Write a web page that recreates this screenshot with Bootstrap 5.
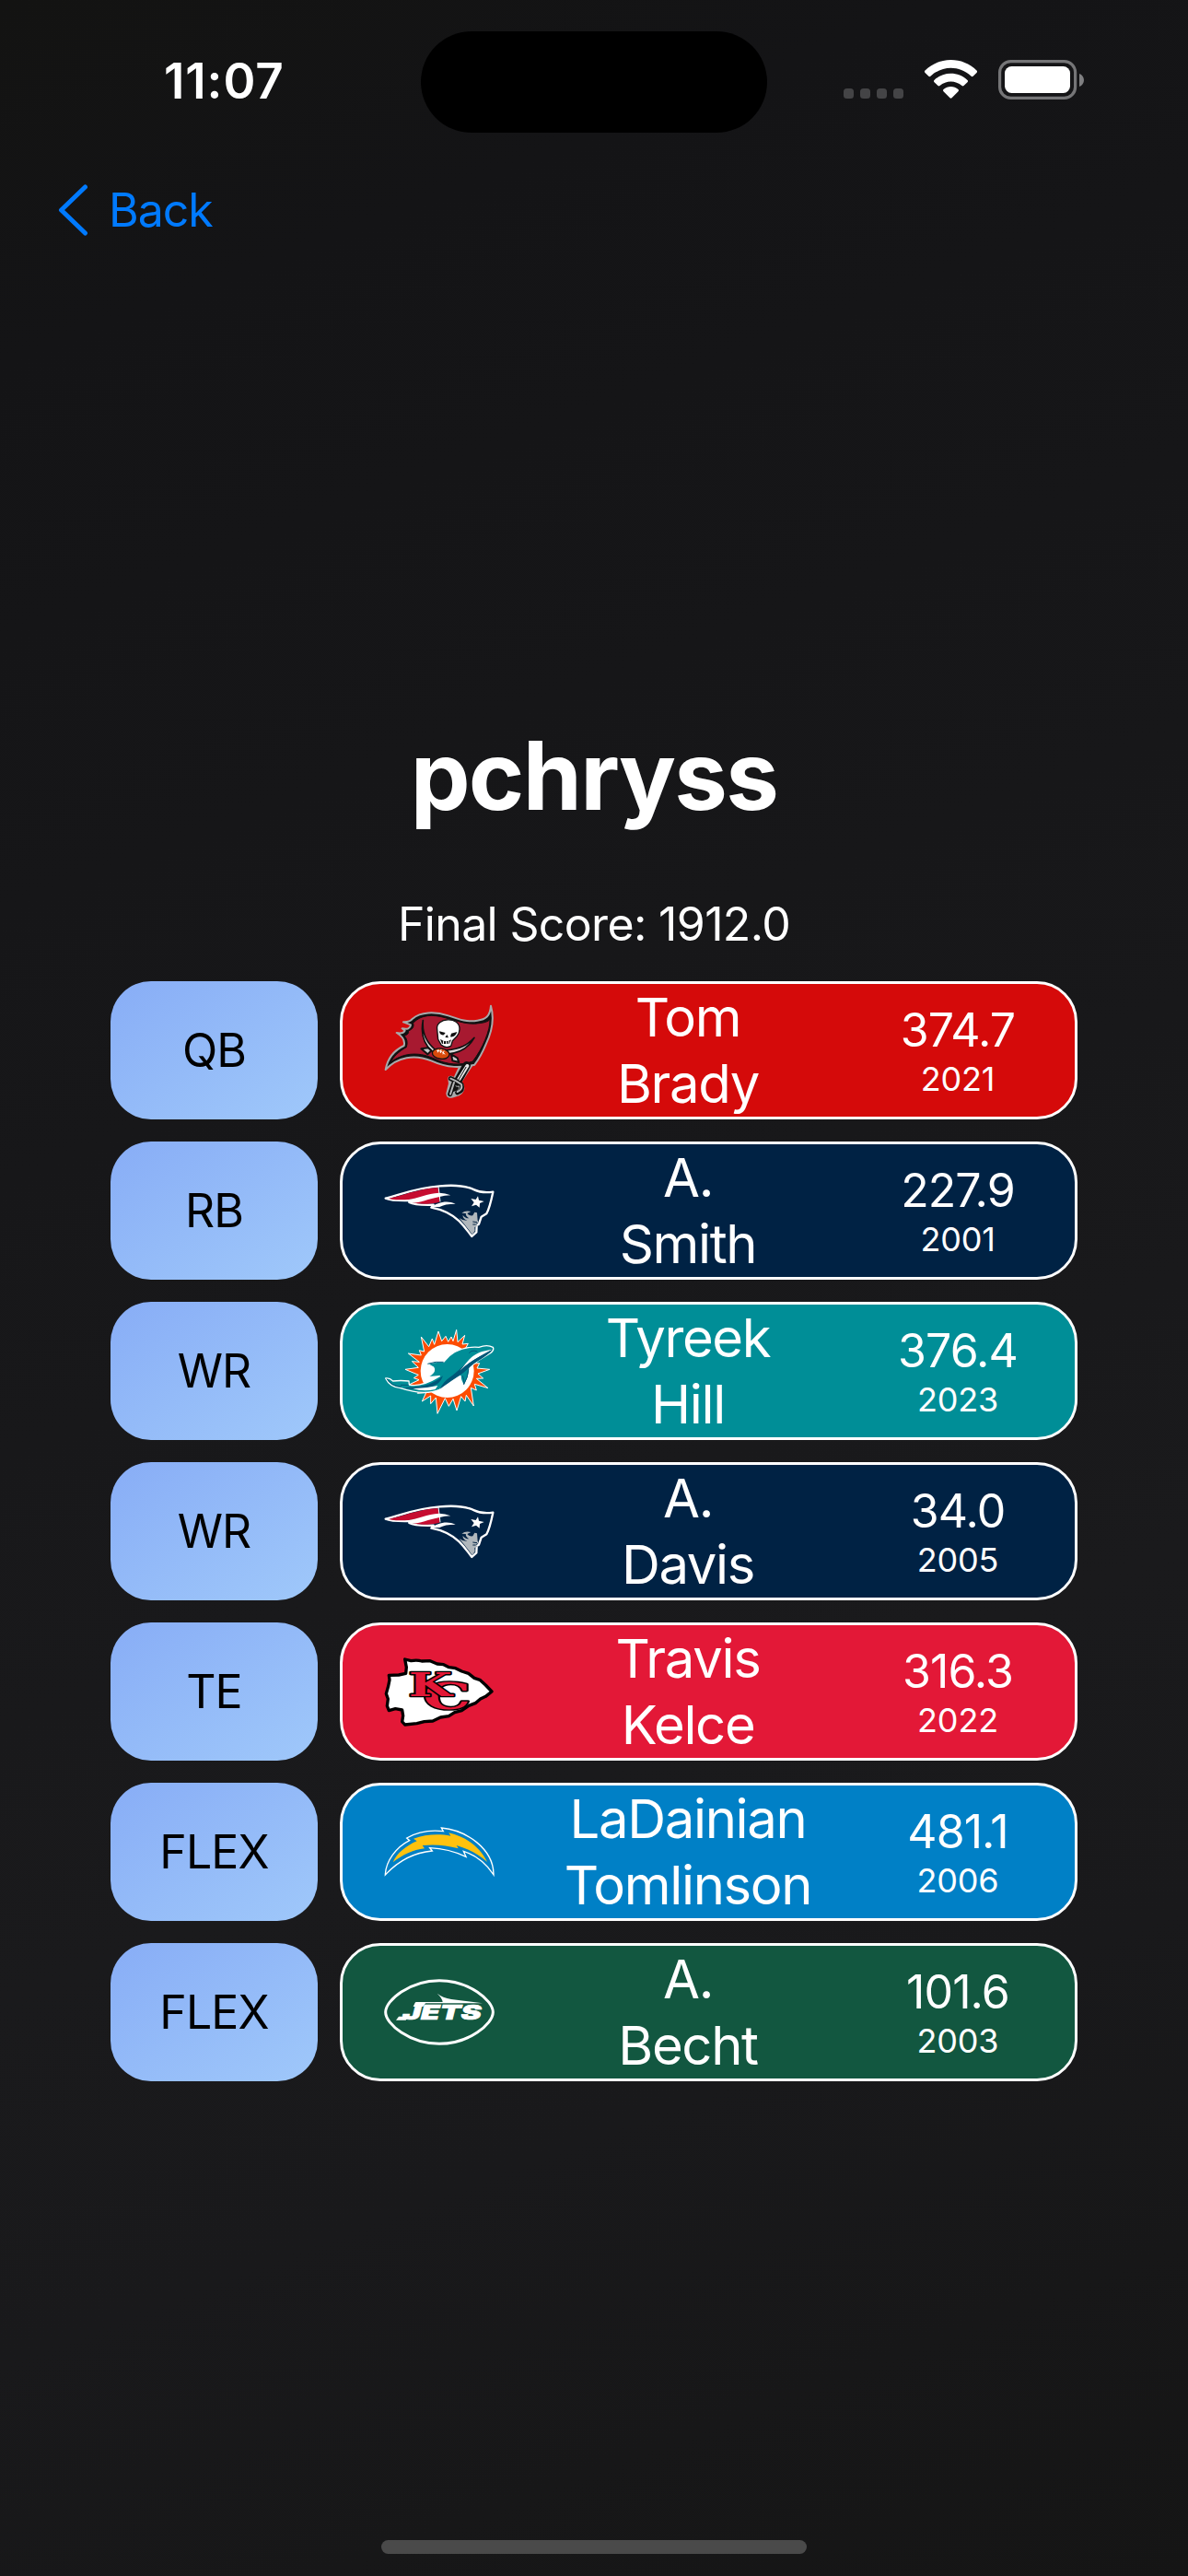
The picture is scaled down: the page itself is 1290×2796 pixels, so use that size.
<!DOCTYPE html>
<html lang="en">
<head>
<meta charset="utf-8">
<meta name="viewport" content="width=device-width, initial-scale=1">
<title>pchryss</title>
<link href="https://cdn.jsdelivr.net/npm/bootstrap@5.3.0/dist/css/bootstrap.min.css" rel="stylesheet">
<style>
  body { font-family: Inter, "Liberation Sans", sans-serif; color: #fff; background: #171719; }
  .screen { width: 1290px; height: 2796px; background: linear-gradient(159deg, #131312 0%, #141416 12%, #1a1a1c 66%, #19191b 78%, #151515 100%); }
  .status { height: 144px; padding-top: 34px; }
  .status-side { width: 457px; height: 110px; padding: 22px 0 0 178px; }
  .clock { font-size: 53px; line-height: 64px; font-weight: 600; letter-spacing: .9px; }
  .island { width: 376px; height: 110px; background: #000; }
  .status-icons { padding: 31px 113px 0 83px; height: 74px; }
  .back { height: 64px; margin-top: 52px; padding-left: 62px; color: #007aff; font-size: 50px; line-height: 64px; letter-spacing: -1px; }
  .back:hover { color: #007aff; }
  .back svg { margin-right: 22px; }
  .title { font-size: 103px; line-height: 124px; font-weight: 700; letter-spacing: -1.7px; margin: 520px 0 0; }
  .final { font-size: 50px; line-height: 61px; letter-spacing: -.65px; margin: 69px 0 31px; }
  .lineup { width: 1050px; gap: 24px; }
  .pick { height: 150px; gap: 24px; }
  .slot { width: 225px; border-radius: 44px; background: linear-gradient(146deg, #88adf6, #9fc8fa); color: #000; font-size: 50px; letter-spacing: -.9px; }
  .player { width: 801px; border: 3px solid #fff; border-radius: 44px; padding: 0 44px 0 45px; }
  .logo { width: 120px; height: 120px; }
  .who { width: 420px; font-size: 58px; line-height: 72px; letter-spacing: -1.35px; }
  .pts { width: 166px; font-size: 50px; line-height: 61px; padding-top: 1px; letter-spacing: -.9px; }
  .yr { font-size: 36px; line-height: 44px; letter-spacing: -.2px; }
  .tb { background: #d50a0a; } .ne { background: #002244; } .mia { background: #008e97; }
  .kc { background: #e31837; } .lac { background: #0080c6; } .nyj { background: #125740; }
  .home { width: 462px; height: 15px; background: #4a4a4a; margin-bottom: 24px; }
  .kcmark { font-family: "DejaVu Serif", serif; font-weight: 700; }
  .jetmark { font-family: Inter, sans-serif; font-weight: 900; font-style: italic; letter-spacing: 0; }
</style>
<script src="https://cdn.jsdelivr.net/npm/bootstrap@5.3.0/dist/js/bootstrap.bundle.min.js"></script>
</head>
<body>
<svg width="0" height="0" class="d-none">
  <symbol id="patriots" viewBox="51 12 360 360">
    <path d="M56 152C95 143 150 118 232 112C285 107 320 112 345 124C365 134 385 134 406 131C401 155 396 180 385 202L368 212L360 236L353 240L352 262L337 276C325 262 318 248 296 226C270 202 238 188 205 182L212 173C180 174 150 174 133 165L138 159C105 160 75 160 56 152Z" fill="#002244" stroke="#fff" stroke-width="7" stroke-linejoin="round"/>
    <path d="M66 153C110 143 160 122 226 117L231 136C190 142 145 158 120 157C98 157 80 157 66 153Z" fill="#c60c30"/>
    <path d="M142 166C170 164 205 150 231 145L232 164C200 172 165 172 142 166Z" fill="#c60c30"/>
    <path d="M120 158C165 152 190 136 231 134Q250 134 268 142Q248 142 232 147C195 154 165 168 140 167Z" fill="#fff"/>
    <path d="M204 181C225 166 255 156 284 170Q248 170 232 180Z" fill="#fff"/>
    <path d="M228 113L234 163" stroke="#fff" stroke-width="3"/>
    <path d="M357 145L360 158L377 162L363 168L362 182L351 173L336 178L344 165L334 153L350 156Z" fill="#fff"/>
    <path d="M304 200Q316 190 334 195L322 201Q328 210 340 208L346 197L354 199L356 224L360 230L350 235L356 242L346 246L347 258L338 270Q320 244 296 216Q308 225 322 224Q306 218 308 207Q316 218 328 217Q315 208 318 201Z" fill="#b0b7bc"/>
    <path d="M340 228L354 230M340 237H350" stroke="#002244" stroke-width="3"/>
  </symbol>
</svg>
<main class="screen d-flex flex-column align-items-center overflow-hidden">
  <header class="status d-flex w-100">
    <div class="status-side"><div class="clock">11:07</div></div>
    <div class="island rounded-pill"></div>
    <div class="status-icons d-flex flex-grow-1">
      <svg width="261" height="43" viewBox="916 65 261 43">
        <g fill="#444446"><rect x="916" y="96" width="11" height="11" rx="3.5"/><rect x="934" y="96" width="11" height="11" rx="3.5"/><rect x="952" y="96" width="11" height="11" rx="3.5"/><rect x="970" y="96" width="11" height="11" rx="3.5"/></g>
        <g fill="#fff"><path d="M1004.5 79Q1003.3 77.800 1004.500 76.600C1019.500 61.200 1045.500 61.200 1060.500 76.600Q1061.700 77.800 1060.500 79L1056.600 82.800Q1055.600 83.600 1054.600 82.700C1041.500 70.800 1023.500 70.800 1010.400 82.700Q1009.400 83.600 1008.400 82.800Z"/>
        <path d="M1014.500 89.200Q1013.300 88 1014.500 86.900C1024.500 77.300 1040.500 77.300 1050.500 86.900Q1051.700 88 1050.500 89.200L1046.500 93.100Q1045.500 94 1044.500 93.100C1037.500 87 1027.500 87 1020.500 93.100Q1019.500 94 1018.500 93.100Z"/>
        <path d="M1024.500 99.200Q1023.300 98 1024.500 97C1029 93 1036 93 1040.500 97Q1041.700 98 1040.500 99.200L1033.500 106.300Q1032.500 107.200 1031.500 106.300Z"/></g>
        <rect x="1085.600" y="66.600" width="82" height="39.800" rx="12" fill="none" stroke="#757577" stroke-width="3.200"/>
        <rect x="1091" y="72" width="71" height="29" rx="7.500" fill="#fff"/>
        <path d="M1172 80V94C1175 93 1177 90 1177 87S1175 81 1172 80Z" fill="#7f7f81"/>
      </svg>
    </div>
  </header>
  <nav class="w-100">
    <a href="#" class="back d-flex align-items-center text-decoration-none"><svg width="34" height="56" viewBox="0 0 34 56" fill="none" stroke="currentColor" stroke-width="5" stroke-linecap="round" stroke-linejoin="round"><path d="M30.500 3L4.500 28L30.500 53"/></svg><span>Back</span></a>
  </nav>
  <h1 class="title">pchryss</h1>
  <p class="final">Final Score: 1912.0</p>
  <section class="lineup d-flex flex-column">
    <div class="pick d-flex">
      <div class="slot d-flex align-items-center justify-content-center">QB</div>
      <div class="player tb d-flex align-items-center">
        <svg class="logo overflow-visible" viewBox="51 15 360 360">
          <g stroke-linejoin="round" stroke-linecap="round">
            <path d="M330 244L290 305M306 244L280 300M268 287Q285 292 300 305Q310 323 293 334L272 341Q262 343 262 336L270 304Z" fill="#111" stroke="#a8a9ab" stroke-width="18"/>
            <path d="M56 258C63 220 82 196 116 180C120 165 112 150 92 138Q112 143 119 131L110 124Q136 130 138 112L114 103Q135 104 144 92C170 70 215 68 260 82C300 96 325 104 355 98C382 95 397 84 399 50C409 85 407 125 383 175Q367 214 346 242C300 252 260 254 205 229C150 207 95 216 56 258Z" fill="#111" stroke="#a8a9ab" stroke-width="6"/>
            <path d="M73 233C83 215 97 200 124 185Q131 162 117 148Q134 142 130 132Q152 124 146 106C172 78 210 78 250 89C295 101 325 113 360 107Q388 105 396 94C398 128 372 190 340 231C300 245 258 244 210 220C160 199 112 204 73 233Z" fill="#a71930" stroke="#111" stroke-width="3"/>
            <path d="M320 244L290 298" stroke="#111" stroke-width="26"/><path d="M322 246L292 294" stroke="#e8e8e8" stroke-width="12"/><path d="M318 250L292 294" stroke="#111" stroke-width="3"/>
            <path d="M268 287Q286 294 303 306Q310 326 290 333M279 300L266 338" fill="none" stroke="#111" stroke-width="15"/><path d="M268 287Q286 294 303 306Q308 322 290 330M279 300L267 338" fill="none" stroke="#b5b6b8" stroke-width="6"/>
            <path d="M178 98C174 140 190 170 218 193L209 200C180 174 170 138 178 98ZM345 154C325 190 290 206 252 208L255 195C300 190 320 180 345 154Z" fill="#d8d8d8" stroke="#111" stroke-width="5"/>
            <path d="M172 190L195 187L205 196L193 208ZM270 208L290 220L295 234L274 229Z" fill="#c5c6c8" stroke="#111" stroke-width="6"/>
            <path d="M224 127C217 88 300 82 297 127C296 143 291 145 287 151L274 164L269 181Q252 190 237 177L227 159Z" fill="#fff" stroke="#111" stroke-width="4"/>
            <path d="M231 133L251 138L246 145Q232 147 231 133ZM289 135L270 140L267 151Q284 153 289 135ZM256 144L261 154L250 153ZM234 158Q252 172 270 160L264 174L240 174Z" fill="#111"/><path d="M245 165L244 174M254 167V177M262 165L261 174" stroke="#fff" stroke-width="3"/>
            <ellipse cx="236" cy="206" rx="28" ry="17" transform="rotate(8 236 206)" fill="#d94a0c" stroke="#111" stroke-width="4"/><path d="M224 196Q239 195 249 207M228 193L226 201M237 193L235 203M246 198L243 207" fill="none" stroke="#fff" stroke-width="3"/>
          </g>
        </svg>
        <div class="who text-center">Tom<br>Brady</div>
        <div class="pts text-center">374.7<div class="yr">2021</div></div>
      </div>
    </div>
    <div class="pick d-flex">
      <div class="slot d-flex align-items-center justify-content-center">RB</div>
      <div class="player ne d-flex align-items-center">
        <svg class="logo"><use href="#patriots"/></svg>
        <div class="who text-center">A.<br>Smith</div>
        <div class="pts text-center">227.9<div class="yr">2001</div></div>
      </div>
    </div>
    <div class="pick d-flex">
      <div class="slot d-flex align-items-center justify-content-center">WR</div>
      <div class="player mia d-flex align-items-center">
        <svg class="logo" viewBox="51 9 360 360">
          <path d="M228 60L239 92L252 76L260 94L270 78L276 92L287 55L291 95L314 73L306 102L325 100L317 115L345 140L340 165L362 164L354 180L395 184L357 198L374 213L352 214L390 245L346 232L352 252L334 244L343 303L319 268L315 288L302 272L288 318L276 280L262 304L250 278L225 328L220 276L203 296L203 270L175 288L188 260L160 262L174 246L130 235L165 218L148 212L163 202L120 184L163 178L142 158L166 160L130 132L172 138L166 122L182 126L172 78L197 110L208 84L215 103Z" fill="#fc4c02" stroke="#fff" stroke-width="3"/>
          <circle cx="257" cy="189" r="87" fill="#fff"/>
          <path d="M56 213Q68 210 80 222Q105 219 132 222L133 234C165 241 200 226 232 206L190 210Q222 195 212 177L192 166Q220 158 245 160C275 121 320 109 360 112Q387 102 406 112Q411 122 396 132C370 146 350 160 330 178Q330 210 311 235Q300 222 300 205C275 216 255 233 232 250C200 263 155 262 105 245Q70 242 56 213Z" fill="#008e97" stroke="#fff" stroke-width="4" stroke-linejoin="round"/>
          <path d="M233 248Q244 224 268 208C296 189 327 145 403 119C389 137 358 151 333 174C305 202 270 220 233 248Z" fill="#005778"/>
          <path d="M298 188C322 164 326 142 370 126Q387 121 403 119C370 138 332 155 298 188Z" fill="#fff"/>
          <path d="M403 121C370 137 330 158 298 190L322 183C345 160 388 143 403 121Z" fill="#005778"/>
          <path d="M133 242C175 244 215 230 243 205Q238 220 228 229C200 249 155 253 115 244Z" fill="#005778"/><path d="M145 247Q185 246 226 237L218 249Q180 257 145 247Z" fill="#fff"/>
          <path d="M193 166Q220 157 245 160M307 205Q313 218 311 233Q324 212 326 184M328 131Q337 119 355 126M60 215Q75 238 108 241M105 235L131 235" fill="none" stroke="#005778" stroke-width="3"/>
        </svg>
        <div class="who text-center">Tyreek<br>Hill</div>
        <div class="pts text-center">376.4<div class="yr">2023</div></div>
      </div>
    </div>
    <div class="pick d-flex">
      <div class="slot d-flex align-items-center justify-content-center">WR</div>
      <div class="player ne d-flex align-items-center">
        <svg class="logo"><use href="#patriots"/></svg>
        <div class="who text-center">A.<br>Davis</div>
        <div class="pts text-center">34.0<div class="yr">2005</div></div>
      </div>
    </div>
    <div class="pick d-flex">
      <div class="slot d-flex align-items-center justify-content-center">TE</div>
      <div class="player kc d-flex align-items-center">
        <svg class="logo" viewBox="51 18 360 360">
          <path d="M119 93L139 98Q158 94 174 99L201 98L224 108L245 110L263 119L284 122L304 132L326 139L345 154L363 160L382 177L402 198L382 214L365 222L350 235L327 244L304 260L281 266L262 278L235 282L210 294L182 296L158 302L119 306L110 296L113 277L110 258L88 254L67 260L61 245L64 222L58 205L65 180L69 160L67 145L99 144L122 139L124 119Z" fill="#fff" stroke="#000" stroke-width="10" stroke-linejoin="round"/>
          <g class="kcmark" fill="#e31837" stroke="#000" stroke-width="8" paint-order="stroke" stroke-linejoin="round">
            <text x="178" y="254" font-size="120" textLength="156" lengthAdjust="spacingAndGlyphs">C</text>
            <text x="131" y="214" font-size="104" textLength="141" lengthAdjust="spacingAndGlyphs">K</text>
          </g>
        </svg>
        <div class="who text-center">Travis<br>Kelce</div>
        <div class="pts text-center">316.3<div class="yr">2022</div></div>
      </div>
    </div>
    <div class="pick d-flex">
      <div class="slot d-flex align-items-center justify-content-center">FLEX</div>
      <div class="player lac d-flex align-items-center">
        <svg class="logo overflow-visible" viewBox="51 15 360 360">
          <path d="M55 270C57 225 90 180 134 158L125 150C160 130 200 123 244 128L238 117C320 125 408 185 408 270C385 235 352 207 310 193L318 211C280 193 245 184 200 182L208 192C150 197 96 226 55 270Z" fill="none" stroke="#fff" stroke-width="4"/>
          <path d="M80 229C94 198 122 176 158 160L147 152C185 138 230 135 268 143L262 133C320 146 365 181 387 228C360 202 325 185 287 174L293 184C255 174 220 170 176 174L183 184C145 188 112 205 80 229Z" fill="#ffc20e"/>
        </svg>
        <div class="who text-center">LaDainian<br>Tomlinson</div>
        <div class="pts text-center">481.1<div class="yr">2006</div></div>
      </div>
    </div>
    <div class="pick d-flex">
      <div class="slot d-flex align-items-center justify-content-center">FLEX</div>
      <div class="player nyj d-flex align-items-center">
        <svg class="logo" viewBox="51 12 360 360">
          <path d="M56 192C56 153 135 89 231 89S406 153 406 192S327 295 231 295S56 231 56 192Z" fill="none" stroke="#fff" stroke-width="9"/>
          <path d="M224 131Q242 145 270 150L372 163H152L157 159H242Q240 145 224 131Z" fill="#fff"/>
          <path d="M153 160H188L178 174H146ZM90 218L99 206H130L122 218Z" fill="#fff"/>
          <text class="jetmark" x="112" y="217" font-size="63" fill="#fff" stroke="#fff" stroke-width="2" textLength="256" lengthAdjust="spacingAndGlyphs">JETS</text>
        </svg>
        <div class="who text-center">A.<br>Becht</div>
        <div class="pts text-center">101.6<div class="yr">2003</div></div>
      </div>
    </div>
  </section>
  <div class="home rounded-pill mt-auto flex-shrink-0"></div>
</main>
</body>
</html>
